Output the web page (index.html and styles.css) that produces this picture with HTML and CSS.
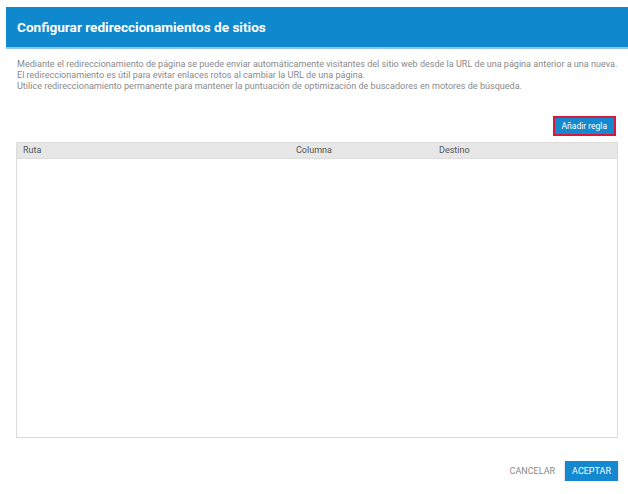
FILE: index.html
```html
<!DOCTYPE html>
<html>
<head>
	<meta charset="utf-8">
	<title>Configurar redireccionamientos de sitios</title>
	<link rel="stylesheet" href="styles.css">
</head>
<body>
<div class="dialog">
	<div class="dialog-head">Configurar redireccionamientos de sitios</div>
	<div class="dialog-body">
		<p class="desc">
			Mediante el redireccionamiento de página se puede enviar automáticamente visitantes del sitio web desde la URL de una página anterior a una nueva.<br>
			El redireccionamiento es útil para evitar enlaces rotos al cambiar la URL de una página.<br>
			Utilice redireccionamiento permanente para mantener la puntuación de optimización de buscadores en motores de búsqueda.
		</p>
		<div class="toolbar">
			<button class="btn-add">Añadir regla</button>
		</div>
		<div class="grid">
			<div class="grid-head">
				<span class="col-ruta">Ruta</span>
				<span class="col-columna">Columna</span>
				<span class="col-destino">Destino</span>
			</div>
			<div class="grid-rows"></div>
		</div>
	</div>
	<div class="dialog-foot">
		<button class="btn-cancel">CANCELAR</button>
		<button class="btn-ok">ACEPTAR</button>
	</div>
</div>
</body>
</html>
```

FILE: styles.css
```css
body, p {
	margin: 0
}

body {
	background: #ffffff;
	font-family: Roboto, "Liberation Sans", Arial, sans-serif;
}

button {
	outline: none;
	font-family: inherit;
	cursor: pointer;
}

.dialog {
	width: 622px;
	margin: 7px 0 0 6px;
}

.dialog-head {
	height: 40px;
	line-height: 40px;
	padding-left: 11px;
	background-color: #0f88cd;
	border-bottom: 2px solid #8cc6ea;
	color: #ffffff;
	font-size: 13.6px;
	font-weight: bold;
}

.dialog-body {
	padding: 10px 10px 0 10px;
}

.desc {
	font-size: 9.06px;
	line-height: 11px;
	color: #8a8a8a;
	padding-left: 1px;
	white-space: nowrap;
}

.toolbar {
	display: flex;
	justify-content: flex-end;
	margin-top: 24px;
	padding-right: 2px;
}

.btn-add {
	height: 20px;
	padding: 0 7px;
	background-color: #1589d0;
	color: #ffffff;
	font-size: 8.5px;
	border: 2px solid #d8193b;
}

.grid {
	margin-top: 6px;
	width: 600px;
	height: 294px;
	border: 1px solid #dcdcdc;
	display: flex;
	flex-direction: column;
}

.grid-head {
	height: 15px;
	line-height: 15px;
	background-color: #e7e7e7;
	border-bottom: 1px solid #dcdcdc;
	display: flex;
	font-size: 9px;
	color: #555555;
}

.col-ruta {
	width: 273px;
	padding-left: 6px;
}

.col-columna {
	width: 143px;
}

.grid-rows {
	flex: 1;
}

.dialog-foot {
	display: flex;
	justify-content: flex-end;
	align-items: center;
	gap: 8px;
	margin-top: 23px;
	padding-right: 10px;
}

.btn-cancel {
	background: none;
	border: none;
	color: #8a8a8a;
	font-size: 9px;
	padding: 0 2px;
}

.btn-ok {
	height: 20px;
	padding: 0 7px;
	border: none;
	background-color: #1589d0;
	color: #ffffff;
	font-size: 9px;
	box-shadow: 0 1px 2px rgba(0, 0, 0, 0.3);
}
```
